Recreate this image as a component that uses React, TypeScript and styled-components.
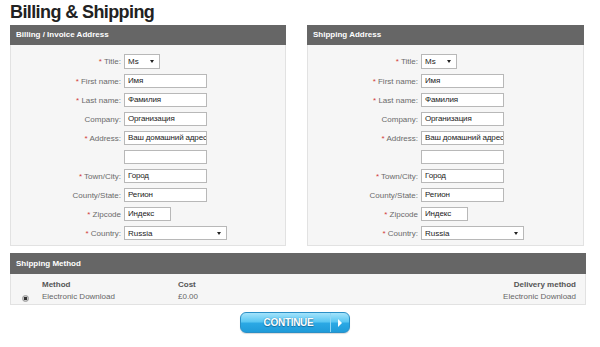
import React from 'react';
import styled, { createGlobalStyle } from 'styled-components';

const Global = createGlobalStyle`
  html, body { margin: 0; padding: 0; background: #fff; }
  body { font-family: "Liberation Sans", Arial, sans-serif; }
  * { box-sizing: border-box; }
`;

const Page = styled.div`
  width: 600px;
  height: 347px;
  padding: 0 14px 0 10px;
  overflow: hidden;
`;

const Title = styled.h1`
  margin: 0;
  height: 25px;
  font-size: 18px;
  line-height: 24px;
  font-weight: bold;
  letter-spacing: -0.6px;
  color: #222;
`;

const Columns = styled.div`
  display: grid;
  grid-template-columns: 276px 277px;
  column-gap: 21px;
`;

const Panel = styled.section``;

const PanelHeader = styled.div<{ $h?: number }>`
  height: ${(p) => p.$h ?? 20}px;
  line-height: ${(p) => p.$h ?? 20}px;
  background: #666;
  color: #fff;
  font-size: 8px;
  font-weight: bold;
  padding-left: 6px;
`;

const FormBody = styled.div`
  background: #f6f6f6;
  border: 1px solid #e2e2e2;
  border-top: none;
  padding: 9px 0 5px;
  display: flex;
  flex-direction: column;
  gap: 5px;
`;

const Row = styled.div<{ $h?: number }>`
  display: flex;
  align-items: center;
  height: ${(p) => p.$h ?? 14}px;
`;

const Label = styled.label`
  width: 110px;
  margin-right: 3px;
  text-align: right;
  font-size: 8px;
  color: #6a6a6a;
  white-space: nowrap;
`;

const Star = styled.span`
  color: #d23c3c;
`;

const TextInput = styled.div<{ $w: number }>`
  width: ${(p) => p.$w}px;
  height: 14px;
  line-height: 12px;
  border: 1px solid #b8b8b8;
  background: #fff;
  font-size: 8px;
  letter-spacing: -0.15px;
  color: #222;
  padding: 0 2px 0 3px;
  white-space: nowrap;
  overflow: hidden;
`;

const SelectBox = styled.div<{ $w: number; $h?: number }>`
  width: ${(p) => p.$w}px;
  height: ${(p) => p.$h ?? 14}px;
  border: 1px solid #b8b8b8;
  background: #fff;
  font-size: 8px;
  color: #222;
  padding: 0 5px 0 3px;
  display: flex;
  align-items: center;
  justify-content: space-between;
`;

const Arrow = styled.span`
  width: 0;
  height: 0;
  border-top: 3px solid #222;
  border-left: 2.5px solid transparent;
  border-right: 2.5px solid transparent;
`;

const MethodPanel = styled.section`
  margin-top: 7px;
  width: 576px;
`;

const MethodBody = styled.div`
  background: #f6f6f6;
  border: 1px solid #e2e2e2;
  border-top: none;
  padding: 5px 9px 1px 0;
  display: grid;
  grid-template-columns: 31px 136px 1fr auto;
  grid-auto-rows: 12px;
  font-size: 8px;
  line-height: 12px;
  color: #666;
`;

const Head = styled.div<{ $right?: boolean }>`
  font-weight: bold;
  color: #555;
  text-align: ${(p) => (p.$right ? 'right' : 'left')};
`;

const Cell = styled.div<{ $right?: boolean }>`
  text-align: ${(p) => (p.$right ? 'right' : 'left')};
`;

const RadioCell = styled.div`
  display: flex;
  align-items: center;
  padding-left: 11px;
  padding-top: 2px;
`;

const Radio = styled.span`
  width: 7px;
  height: 7px;
  border-radius: 50%;
  background: radial-gradient(circle, #333 0 1.5px, #c9c9c9 2px);
  border: 1px solid #9a9a9a;
`;

const ButtonRow = styled.div`
  display: flex;
  padding-left: 230px;
  margin-top: 7px;
`;

const ContinueButton = styled.button`
  width: 110px;
  height: 21px;
  padding: 0;
  border: 1px solid #2a8fc6;
  border-radius: 6px;
  background: linear-gradient(#a4e3fb 0%, #5cc8f3 45%, #2ba8e4 55%, #1f9bd9 100%);
  display: flex;
  align-items: stretch;
  cursor: pointer;
  box-shadow: 0 1px 1px rgba(0, 0, 0, 0.15);
`;

const ButtonText = styled.span`
  flex: 1;
  display: flex;
  align-items: center;
  justify-content: center;
  padding-left: 6px;
  font-family: "Liberation Sans", Arial, sans-serif;
  font-size: 10px;
  font-weight: bold;
  letter-spacing: -0.3px;
  color: #fff;
  text-shadow: 0 0 1px #1a6f9e, 0 1px 1px #1a6f9e;
`;

const ButtonArrow = styled.span`
  width: 19px;
  border-left: 1px solid #8fd6f5;
  display: flex;
  align-items: center;
  justify-content: center;
  &::after {
    content: '';
    width: 0;
    height: 0;
    border-left: 4px solid #fff;
    border-top: 4px solid transparent;
    border-bottom: 4px solid transparent;
  }
`;

type Field = {
  label: string;
  req?: boolean;
  value?: string;
  kind: 'text' | 'select';
  w: number;
  h?: number;
};

const fields: Field[] = [
  { label: 'Title:', req: true, value: 'Ms', kind: 'select', w: 36, h: 15 },
  { label: 'First name:', req: true, value: 'Имя', kind: 'text', w: 83 },
  { label: 'Last name:', req: true, value: 'Фамилия', kind: 'text', w: 83 },
  { label: 'Company:', value: 'Организация', kind: 'text', w: 83 },
  { label: 'Address:', req: true, value: 'Ваш домашний адрес', kind: 'text', w: 83 },
  { label: '', value: '', kind: 'text', w: 83 },
  { label: 'Town/City:', req: true, value: 'Город', kind: 'text', w: 83 },
  { label: 'County/State:', value: 'Регион', kind: 'text', w: 83 },
  { label: 'Zipcode', req: true, value: 'Индекс', kind: 'text', w: 47 },
  { label: 'Country:', req: true, value: 'Russia', kind: 'select', w: 103 },
];

const AddressForm: React.FC<{ title: string }> = ({ title }) => (
  <Panel>
    <PanelHeader>{title}</PanelHeader>
    <FormBody>
      {fields.map((f, i) => (
        <Row key={i} $h={f.h}>
          <Label>
            {f.req && <Star>* </Star>}
            {f.label}
          </Label>
          {f.kind === 'text' ? (
            <TextInput $w={f.w}>{f.value}</TextInput>
          ) : (
            <SelectBox $w={f.w} $h={f.h}>
              <span>{f.value}</span>
              <Arrow />
            </SelectBox>
          )}
        </Row>
      ))}
    </FormBody>
  </Panel>
);

export default function App() {
  return (
    <>
      <Global />
      <Page>
        <Title>Billing &amp; Shipping</Title>
        <Columns>
          <AddressForm title="Billing / Invoice Address" />
          <AddressForm title="Shipping Address" />
        </Columns>
        <MethodPanel>
          <PanelHeader $h={21}>Shipping Method</PanelHeader>
          <MethodBody>
            <div />
            <Head>Method</Head>
            <Head>Cost</Head>
            <Head $right>Delivery method</Head>
            <RadioCell>
              <Radio />
            </RadioCell>
            <Cell>Electronic Download</Cell>
            <Cell>£0.00</Cell>
            <Cell $right>Electronic Download</Cell>
          </MethodBody>
        </MethodPanel>
        <ButtonRow>
          <ContinueButton type="button">
            <ButtonText>CONTINUE</ButtonText>
            <ButtonArrow />
          </ContinueButton>
        </ButtonRow>
      </Page>
    </>
  );
}
